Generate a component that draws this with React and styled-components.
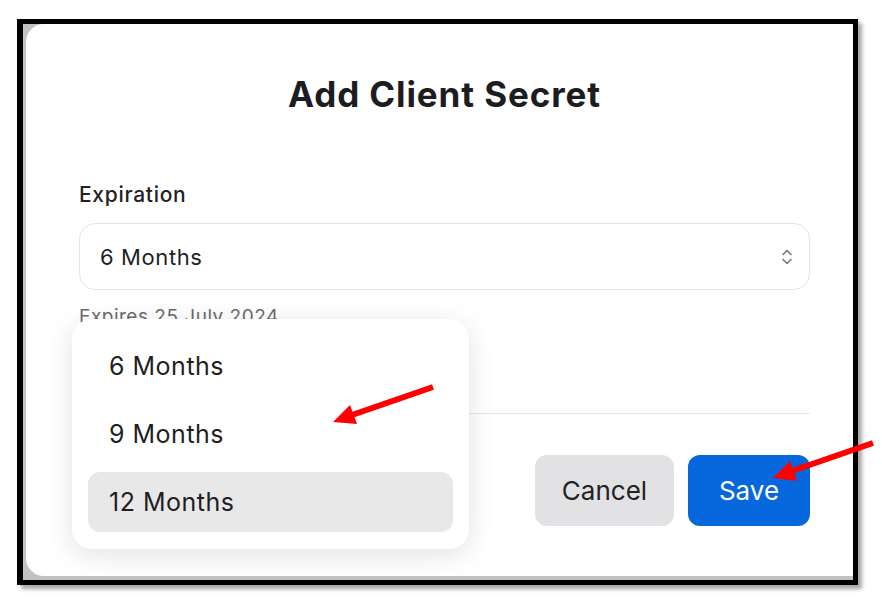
import styled, { createGlobalStyle } from "styled-components";

const GlobalStyle = createGlobalStyle`
  body {
    margin: 0;
    background: #ffffff;
    font-family: "Inter", "Liberation Sans", sans-serif;
  }
`;

const Page = styled.div`
  position: relative;
  width: 882px;
  height: 600px;
  box-sizing: border-box;
  padding: 19px 0 0 17px;
`;

const Frame = styled.div`
  width: 841px;
  height: 566px;
  box-sizing: border-box;
  border: 5px solid #000;
  border-left-width: 6px;
  background: #c2c2c2;
  box-shadow: 4px 4px 4px rgba(0, 0, 0, 0.35);
  overflow: hidden;
`;

const Dialog = styled.div`
  margin-left: 3px;
  width: 846px;
  height: 552px;
  box-sizing: border-box;
  padding: 50px 62px 0 53px;
  background: #ffffff;
  border-radius: 18px;
`;

const Title = styled.h1`
  margin: 0;
  font-size: 35px;
  line-height: 41px;
  font-weight: 700;
  color: #1d1d1f;
  text-align: center;
  letter-spacing: 0.9px;
`;

const Label = styled.div`
  margin-top: 68px;
  font-size: 21px;
  line-height: 24px;
  font-weight: 500;
  color: #222;
  letter-spacing: 0.7px;
`;

const Field = styled.div`
  position: relative;
  margin-top: 16px;
`;

const SelectBox = styled.div`
  height: 67px;
  box-sizing: border-box;
  border: 1px solid #e4e4e4;
  border-radius: 16px;
  display: flex;
  align-items: center;
  justify-content: space-between;
  padding: 0 16px 0 20px;
  font-size: 22px;
  letter-spacing: 0.6px;
  color: #1f1f1f;
`;

const Hint = styled.div`
  margin-top: 15px;
  font-size: 19px;
  line-height: 24px;
  letter-spacing: 0.5px;
  color: #6b6b6b;
`;

const Divider = styled.div`
  margin-top: 84px;
  height: 1px;
  background: #e6e6e6;
`;

const Actions = styled.div`
  margin-top: 41px;
  display: flex;
  justify-content: flex-end;
  gap: 14px;
`;

const Button = styled.button`
  height: 71px;
  width: ${(p) => p.$width}px;
  border: none;
  border-radius: 12px;
  font-family: inherit;
  font-size: 26px;
  background: ${(p) => (p.$primary ? "#0767dc" : "#e2e2e4")};
  color: ${(p) => (p.$primary ? "#ffffff" : "#222")};
`;

const Menu = styled.div`
  position: absolute;
  left: -7px;
  top: 96px;
  width: 397px;
  box-sizing: border-box;
  padding: 17px 16px 17px;
  display: flex;
  flex-direction: column;
  gap: 8px;
  background: #ffffff;
  border-radius: 20px;
  box-shadow: 0 6px 28px rgba(0, 0, 0, 0.12);
`;

const MenuItem = styled.div`
  height: 60px;
  display: flex;
  align-items: center;
  padding-left: 21px;
  border-radius: 12px;
  font-size: 25px;
  letter-spacing: 0.5px;
  color: #1f1f1f;
  background: ${(p) => (p.$active ? "#e8e8e8" : "transparent")};
`;

const Overlay = styled.svg`
  position: absolute;
  left: 0;
  top: 0;
  pointer-events: none;
`;

function UpDown() {
  return (
    <svg width="12" height="18" viewBox="0 0 12 18" fill="none">
      <path
        d="M2 6.5 6 2.5 10 6.5M2 11.5 6 15.5 10 11.5"
        stroke="#777"
        strokeWidth="1.6"
        strokeLinecap="round"
        strokeLinejoin="round"
      />
    </svg>
  );
}

function Arrow({ x1, y1, bx, by, points }) {
  return (
    <g>
      <line x1={x1} y1={y1} x2={bx} y2={by} stroke="#ff0000" strokeWidth="6" />
      <polygon points={points} fill="#ff0000" />
    </g>
  );
}

const options = ["6 Months", "9 Months", "12 Months"];

export default function App() {
  return (
    <Page>
      <GlobalStyle />
      <Frame>
        <Dialog>
          <Title>Add Client Secret</Title>
          <Label>Expiration</Label>
          <Field>
            <SelectBox>
              <span>6 Months</span>
              <UpDown />
            </SelectBox>
            <Hint>Expires 25 July 2024</Hint>
            <Menu>
              {options.map((o) => (
                <MenuItem key={o} $active={o === "12 Months"}>
                  {o}
                </MenuItem>
              ))}
            </Menu>
          </Field>
          <Divider />
          <Actions>
            <Button $width={139}>Cancel</Button>
            <Button $primary $width={122}>
              Save
            </Button>
          </Actions>
        </Dialog>
      </Frame>
      <Overlay width="882" height="600">
        <Arrow x1={433} y1={387} bx={352} by={415} points="333,422 357,424 350,405" />
        <Arrow x1={873} y1={443} bx={792} by={471} points="773,478 797,481 790,461" />
      </Overlay>
    </Page>
  );
}
